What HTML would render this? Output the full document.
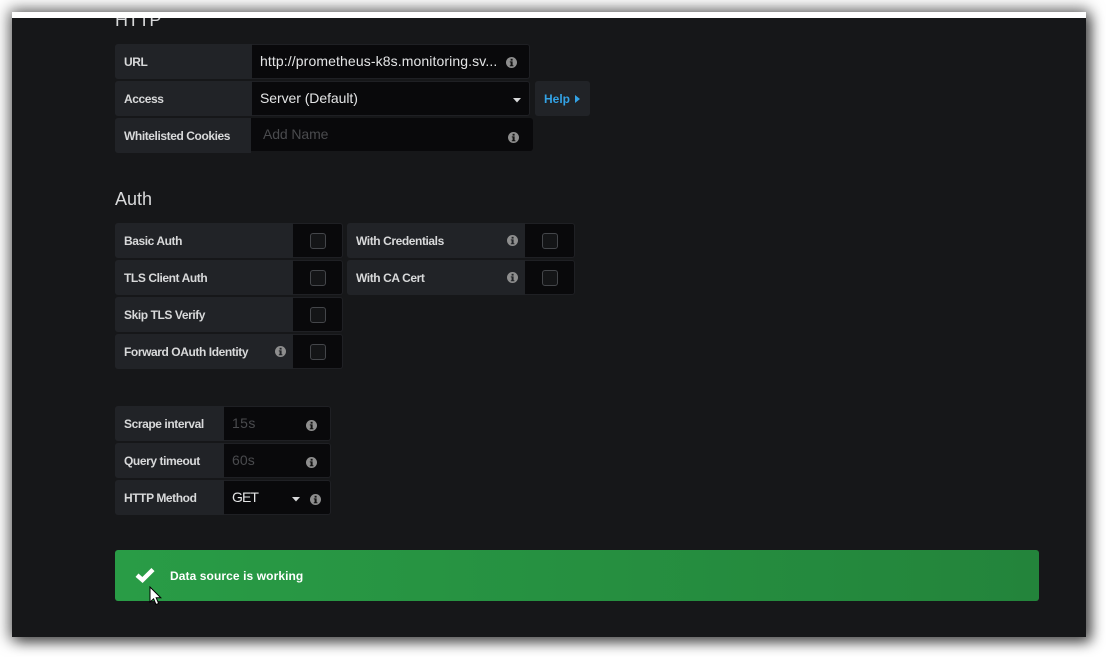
<!DOCTYPE html>
<html><head><meta charset="utf-8">
<style>
html,body{margin:0;padding:0;background:#fff;width:1106px;height:657px;overflow:hidden}
*{box-sizing:border-box}
#win{position:absolute;left:12px;top:12px;width:1074px;height:625px;background:#161719;box-shadow:0 0 14px 3px rgba(0,0,0,.55),5px 5px 12px rgba(0,0,0,.45);overflow:hidden}
#strip{position:absolute;left:12px;top:12px;width:1074px;height:6px;background:#fff}
.a{position:absolute;font-family:"Liberation Sans",sans-serif;white-space:nowrap}
.l{background:#212327;border-radius:3px 0 0 3px;color:#d8d9da;font-weight:bold;font-size:12px;line-height:37px;padding-left:9px;height:35px;letter-spacing:-.42px}
.i{background:#09090b;border:1px solid #1f2024;border-left:0;border-radius:0 3px 3px 0;height:35px;color:#d8d9da;font-size:14px;line-height:32px;padding-left:8px}
.c{position:absolute;width:16px;height:16px;border:1px solid #44464a;border-radius:3px;background:#141517}
.ph{color:#4a4b4e}
svg{position:absolute;display:block}
</style></head><body>
<div id="win"></div>
<div class="a" style="left:115px;top:8px;font-size:18px;color:#d8d9da;line-height:24px;letter-spacing:-.2px;">HTTP</div>
<div id="strip"></div>

<div class="a l" style="left:115px;top:44px;width:137px">URL</div>
<div class="a i" style="left:252px;top:44px;width:278px;letter-spacing:.11px;color:#e4e5e6">http://prometheus-k8s.monitoring.sv...</div>
<div class="a l" style="left:115px;top:81px;width:137px">Access</div>
<div class="a i" style="left:252px;top:81px;width:278px;letter-spacing:-.06px;color:#e4e5e6">Server (Default)</div>
<div class="a" style="left:535px;top:81px;width:55px;height:35px;background:#212327;border-radius:3px;color:#33a2e5;font-weight:bold;font-size:12px;line-height:36px;padding-left:9px">Help</div>
<svg style="left:575px;top:95px" width="5" height="8" viewBox="0 0 5 8"><path d="M0 0L5 4L0 8Z" fill="#33a2e5"/></svg>
<svg style="left:513px;top:98px" width="8" height="5" viewBox="0 0 8 5"><path d="M0 0H8L4 4.5Z" fill="#d8d9da"/></svg>

<div class="a l" style="left:115px;top:118px;width:136px">Whitelisted Cookies</div>
<div class="a" style="left:251px;top:118px;width:6px;height:33px;background:#09090b"></div>
<div class="a i ph" style="left:257px;top:118px;width:276px;height:33px;border:0;padding-left:6px;line-height:32px;border-radius:0 3px 3px 0;color:#4a4b4e;letter-spacing:-.1px">Add Name</div>

<div class="a" style="left:115px;top:187px;font-size:18px;color:#d8d9da;line-height:24px">Auth</div>

<div class="a l" style="left:115px;top:223px;width:178px">Basic Auth</div>
<div class="a i" style="left:293px;top:223px;width:50px"></div><div class="c" style="left:310px;top:233px"></div>
<div class="a l" style="left:115px;top:260px;width:178px">TLS Client Auth</div>
<div class="a i" style="left:293px;top:260px;width:50px"></div><div class="c" style="left:310px;top:270px"></div>
<div class="a l" style="left:115px;top:297px;width:178px">Skip TLS Verify</div>
<div class="a i" style="left:293px;top:297px;width:50px"></div><div class="c" style="left:310px;top:307px"></div>
<div class="a l" style="left:115px;top:334px;width:178px">Forward OAuth Identity</div>
<div class="a i" style="left:293px;top:334px;width:50px"></div><div class="c" style="left:310px;top:344px"></div>

<div class="a l" style="left:347px;top:223px;width:178px">With Credentials</div>
<div class="a i" style="left:525px;top:223px;width:50px"></div><div class="c" style="left:542px;top:233px"></div>
<div class="a l" style="left:347px;top:260px;width:178px">With CA Cert</div>
<div class="a i" style="left:525px;top:260px;width:50px"></div><div class="c" style="left:542px;top:270px"></div>

<div class="a l" style="left:115px;top:406px;width:109px">Scrape interval</div>
<div class="a i ph" style="left:224px;top:406px;width:107px;color:#4a4b4e;letter-spacing:.4px">15s</div>
<div class="a l" style="left:115px;top:443px;width:109px">Query timeout</div>
<div class="a i ph" style="left:224px;top:443px;width:107px;color:#4a4b4e;letter-spacing:.1px">60s</div>
<div class="a l" style="left:115px;top:480px;width:109px">HTTP Method</div>
<div class="a i" style="left:224px;top:480px;width:107px;letter-spacing:-.9px;color:#e4e5e6">GET</div>
<svg style="left:292px;top:497px" width="8" height="5" viewBox="0 0 8 5"><path d="M0 0H8L4 4.5Z" fill="#d8d9da"/></svg>

<svg style="left:506px;top:57px" width="11" height="11" viewBox="0 0 11 11"><circle cx="5.5" cy="5.5" r="5.5" fill="#8e8e8e"/><rect x="4.6" y="1.8" width="2" height="1.8" fill="#111"/><path d="M3.8 4.4H6.6V8.2H7.4V9.2H3.8V8.2H4.6V5.4H3.8Z" fill="#111"/></svg>
<svg style="left:508px;top:132px" width="11" height="11" viewBox="0 0 11 11"><circle cx="5.5" cy="5.5" r="5.5" fill="#8e8e8e"/><rect x="4.6" y="1.8" width="2" height="1.8" fill="#111"/><path d="M3.8 4.4H6.6V8.2H7.4V9.2H3.8V8.2H4.6V5.4H3.8Z" fill="#111"/></svg>
<svg style="left:275px;top:346px" width="11" height="11" viewBox="0 0 11 11"><circle cx="5.5" cy="5.5" r="5.5" fill="#8e8e8e"/><rect x="4.6" y="1.8" width="2" height="1.8" fill="#212327"/><path d="M3.8 4.4H6.6V8.2H7.4V9.2H3.8V8.2H4.6V5.4H3.8Z" fill="#212327"/></svg>
<svg style="left:507px;top:235px" width="11" height="11" viewBox="0 0 11 11"><circle cx="5.5" cy="5.5" r="5.5" fill="#8e8e8e"/><rect x="4.6" y="1.8" width="2" height="1.8" fill="#212327"/><path d="M3.8 4.4H6.6V8.2H7.4V9.2H3.8V8.2H4.6V5.4H3.8Z" fill="#212327"/></svg>
<svg style="left:507px;top:272px" width="11" height="11" viewBox="0 0 11 11"><circle cx="5.5" cy="5.5" r="5.5" fill="#8e8e8e"/><rect x="4.6" y="1.8" width="2" height="1.8" fill="#212327"/><path d="M3.8 4.4H6.6V8.2H7.4V9.2H3.8V8.2H4.6V5.4H3.8Z" fill="#212327"/></svg>
<svg style="left:306px;top:420px" width="11" height="11" viewBox="0 0 11 11"><circle cx="5.5" cy="5.5" r="5.5" fill="#8e8e8e"/><rect x="4.6" y="1.8" width="2" height="1.8" fill="#111"/><path d="M3.8 4.4H6.6V8.2H7.4V9.2H3.8V8.2H4.6V5.4H3.8Z" fill="#111"/></svg>
<svg style="left:306px;top:457px" width="11" height="11" viewBox="0 0 11 11"><circle cx="5.5" cy="5.5" r="5.5" fill="#8e8e8e"/><rect x="4.6" y="1.8" width="2" height="1.8" fill="#111"/><path d="M3.8 4.4H6.6V8.2H7.4V9.2H3.8V8.2H4.6V5.4H3.8Z" fill="#111"/></svg>
<svg style="left:310px;top:494px" width="11" height="11" viewBox="0 0 11 11"><circle cx="5.5" cy="5.5" r="5.5" fill="#8e8e8e"/><rect x="4.6" y="1.8" width="2" height="1.8" fill="#111"/><path d="M3.8 4.4H6.6V8.2H7.4V9.2H3.8V8.2H4.6V5.4H3.8Z" fill="#111"/></svg>

<div class="a" style="left:115px;top:550px;width:924px;height:51px;background:linear-gradient(90deg,#299c46,#23843b);border-radius:3px;color:#fff;font-weight:bold;font-size:12px;line-height:52px;padding-left:55px;letter-spacing:.09px">Data source is working</div>
<svg style="left:135px;top:567px" width="20" height="16" viewBox="0 0 20 16"><path d="M2 8.2L7.5 13L18 2.6" fill="none" stroke="#fff" stroke-width="4.4"/></svg>
<svg style="left:149px;top:586px" width="13" height="20" viewBox="0 0 13 20"><path d="M1 1V16L4.6 12.8L7 18.5L9.6 17.4L7.2 11.8H11.8Z" fill="#fff" stroke="#000" stroke-width="1"/></svg>
</body></html>
